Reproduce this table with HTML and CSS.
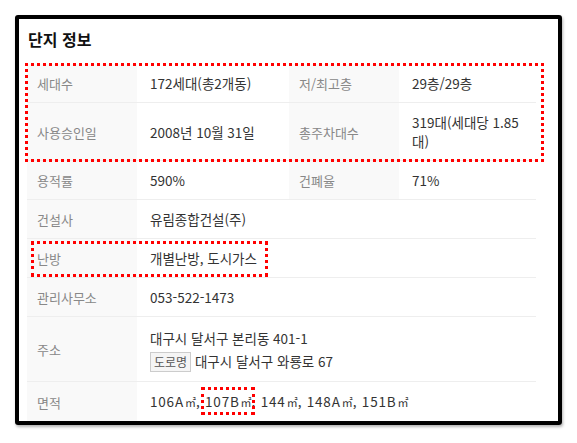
FILE: index.html
```html
<!DOCTYPE html>
<html lang="ko">
<head>
    <meta charset="UTF-8">
    <meta name="viewport" content="width=device-width, initial-scale=1.0">
    <title>단지 정보</title>
    <link rel="stylesheet" href="styles.css">
</head>
<body>
    <div class="frame">
        <h2 class="title">단지 정보</h2>
        <table class="info">
            <colgroup>
                <col class="c-label">
                <col class="c-value1">
                <col class="c-label">
                <col class="c-value2">
            </colgroup>
            <tr>
                <th>세대수</th>
                <td>172세대(총2개동)</td>
                <th>저/최고층</th>
                <td>29층/29층</td>
            </tr>
            <tr>
                <th>사용승인일</th>
                <td>2008년 10월 31일</td>
                <th>총주차대수</th>
                <td>319대(세대당 1.85대)</td>
            </tr>
            <tr>
                <th>용적률</th>
                <td>590%</td>
                <th>건폐율</th>
                <td>71%</td>
            </tr>
            <tr>
                <th>건설사</th>
                <td colspan="3">유림종합건설(주)</td>
            </tr>
            <tr>
                <th>난방</th>
                <td colspan="3">개별난방, 도시가스</td>
            </tr>
            <tr>
                <th>관리사무소</th>
                <td colspan="3">053-522-1473</td>
            </tr>
            <tr>
                <th>주소</th>
                <td colspan="3" class="addr">
                    <div>대구시 달서구 본리동 401-1</div>
                    <div><span class="badge">도로명</span> 대구시 달서구 와룡로 67</div>
                </td>
            </tr>
            <tr>
                <th>면적</th>
                <td colspan="3" class="area">106A<span class="unit">㎡</span>, <span class="hl">107B<span class="unit">㎡</span></span>, 144<span class="unit">㎡</span>, 148A<span class="unit">㎡</span>, 151B<span class="unit">㎡</span></td>
            </tr>
        </table>

        <!-- red highlight marks -->
        <div class="mark mark-top"></div>
        <div class="mark mark-heat"></div>
    </div>
</body>
</html>
```

FILE: styles.css
```css
* {
    margin: 0;
    padding: 0;
    box-sizing: border-box;
}

body {
    background: #fff;
    padding: 15px;
    font-family: "Noto Sans CJK KR", "Noto Sans", sans-serif;
}

/* black hand-drawn looking frame */
.frame {
    position: relative;
    width: 547px;
    height: 410px;
    border: 4px solid #000;
    border-radius: 3px;
    box-shadow: 1px 2px 3px rgba(0, 0, 0, 0.3);
    padding: 0 8px;
    overflow: hidden;
}

.title {
    font-size: 16px;
    font-weight: bold;
    color: #111;
    line-height: 24px;
    padding-top: 8px;
    margin-bottom: 13px;
    padding-left: 1px;
}

.info {
    border-collapse: collapse;
    table-layout: fixed;
    width: 509px;
    font-size: 13px;
    line-height: 19px;
}

.c-label {
    width: 110px;
}

.c-value1 {
    width: 152px;
}

.c-value2 {
    width: 137px;
}

.info th,
.info td {
    border-bottom: 1px solid #eee;
    padding: 10px 13px 9px;
    vertical-align: middle;
    text-align: left;
}

.info th {
    background: #f9f9f9;
    color: #888;
    font-weight: normal;
    padding-left: 10px;
}

.info td {
    color: #333;
    font-size: 13.5px;
}

.addr div {
    line-height: 22px;
}

.addr div + div {
    margin-top: 1px;
}

.badge {
    display: inline-block;
    border: 1px solid #ccc;
    background: #f5f5f5;
    color: #555;
    font-size: 12px;
    line-height: 18px;
    padding: 0 3px;
}

.area {
    letter-spacing: 0.8px;
}

.unit {
    font-size: 11px;
    letter-spacing: 0;
    margin-left: 1px;
}

.hl {
    position: relative;
}

.hl::after {
    content: "";
    position: absolute;
    left: -4px;
    right: -3px;
    top: -4px;
    bottom: -4px;
    border: 3px dotted #f00;
}

.mark {
    position: absolute;
    border: 3px dotted #f00;
}

.mark-top {
    left: 6px;
    top: 44px;
    width: 519px;
    height: 99px;
}

.mark-heat {
    left: 12px;
    top: 222px;
    width: 237px;
    height: 36px;
}
```
